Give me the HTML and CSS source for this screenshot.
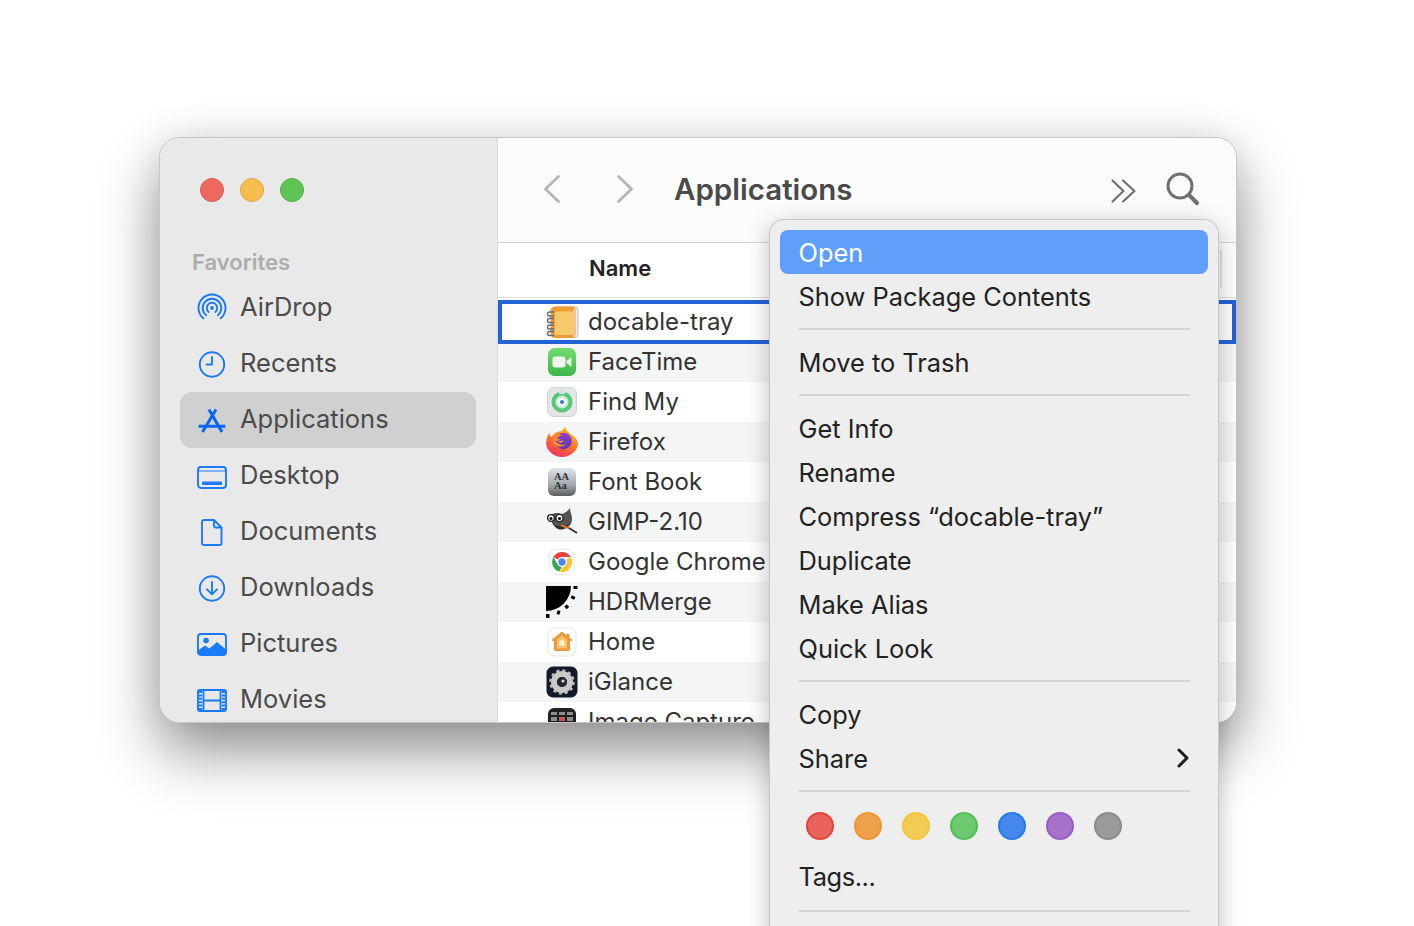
FILE: index.html
```html
<!DOCTYPE html>
<html lang="en">
<head>
<meta charset="utf-8">
<title>Finder context menu</title>
<link rel="stylesheet" href="styles.css">
</head>
<body>
<div class="window">
  <aside class="sidebar">
    <div class="lights"><span class="light red"></span><span class="light yellow"></span><span class="light green"></span></div>
    <div class="side-title">Favorites</div>
    <nav class="side-list">
      <div class="side-item"><svg class="side-icon" viewBox="0 0 32 32"><path d="M7.320 26.340A13.500 13.500 0 1 1 24.680 26.340M10.020 23.120A9.300 9.300 0 1 1 21.980 23.120M12.660 19.980A5.200 5.200 0 1 1 19.340 19.980"/><circle class="solid" cx="16" cy="16" r="1.900"/></svg>AirDrop</div>
      <div class="side-item"><svg class="side-icon" viewBox="0 0 32 32"><circle cx="16" cy="16.500" r="12.200"/><path d="M16 9V16.500H10.500"/></svg>Recents</div>
      <div class="side-item active"><svg class="side-icon dark" viewBox="0 0 32 32"><path class="heavy" d="M13 5.500L26 28M20 5.500L6.500 28M2.500 22.300H29.300"/></svg>Applications</div>
      <div class="side-item"><svg class="side-icon" viewBox="0 0 32 32"><rect x="2" y="7" width="28" height="21" rx="3"/><path class="thin" d="M2 11H30"/><rect class="solid" x="6" y="21.500" width="20" height="3.600" rx="1"/></svg>Desktop</div>
      <div class="side-item"><svg class="side-icon" viewBox="0 0 32 32"><path d="M8 4H18L25.500 11.500V27A2 2 0 0 1 23.500 29H8A2 2 0 0 1 6 27V6A2 2 0 0 1 8 4ZM18 4V9.500A2 2 0 0 0 20 11.500H25.500"/></svg>Documents</div>
      <div class="side-item"><svg class="side-icon" viewBox="0 0 32 32"><circle cx="16" cy="16.500" r="12.200"/><path d="M16 10V22M11 17.300L16 22.300L21 17.300"/></svg>Downloads</div>
      <div class="side-item"><svg class="side-icon" viewBox="0 0 32 32"><rect x="2" y="6" width="28" height="21" rx="3"/><circle class="solid" cx="10" cy="12.500" r="2.800"/><path class="solid" d="M2 27V22.500L9 17.500L13.500 20.500L21 14L30 21.500V27Z"/></svg>Pictures</div>
      <div class="side-item"><svg class="side-icon" viewBox="0 0 32 32"><rect x="2" y="6" width="28" height="21" rx="1.500"/><path d="M7.500 6V27M24.500 6V27M7.500 16.500H24.500"/><path class="perf" d="M4.500 7V26M27.500 7V26"/></svg>Movies</div>
    </nav>
  </aside>
  <main class="main">
    <header class="toolbar">
      <svg class="nav-icon" viewBox="0 0 20 32"><path d="M16.500 3.500L3.500 16L16.500 28.500"/></svg>
      <svg class="nav-icon forward" viewBox="0 0 20 32"><path d="M3.500 3.500L16.500 16L3.500 28.500"/></svg>
      <h1 class="title">Applications</h1>
      <svg class="more-icon" viewBox="0 0 28 26"><path d="M2.500 2.500L13.500 13L2.500 23.500M13 2.500L24.500 13L13 23.500"/></svg>
      <svg class="search-icon" viewBox="0 0 34 34"><circle cx="14" cy="14" r="12"/><path class="handle" d="M23 23L31 31"/></svg>
    </header>
    <div class="columns"><span class="col-name">Name</span><span class="col-divider"></span></div>
    <div class="rows">
      <div class="row selected">
        <svg class="app-icon" viewBox="0 0 32 32"><rect x="7" y="1" width="25" height="30.500" rx="3" fill="#e9e9ee" stroke="#b9bdc9"/><path d="M9 .5H26A3.500 3.500 0 0 1 29.500 4V28.500A3.500 3.500 0 0 1 26 32H9A4.500 4.500 0 0 1 4.500 27.500V5A4.500 4.500 0 0 1 9 .5Z" fill="#ee9c33"/><rect x="9" y="5.500" width="18" height="23.500" rx="1.500" fill="#f9cb68"/><path d="M28 3V31" stroke="#f3e6c9" stroke-width="1.200"/><path d="M8 6H3.500a2 2 0 1 0 0 4H8M8 12.500H3.500a2 2 0 1 0 0 4H8M8 19H3.500a2 2 0 1 0 0 4H8M8 25.500H3.500a2 2 0 1 0 0 4H8" fill="none" stroke="#5b6a80" stroke-width="1.400"/></svg>
        <span>docable-tray</span>
      </div>
      <div class="row">
        <svg class="app-icon" viewBox="0 0 32 32"><defs><linearGradient id="ft" x1="0" y1="0" x2="0" y2="1"><stop offset="0" stop-color="#72dd6d"/><stop offset="1" stop-color="#3db54a"/></linearGradient></defs><rect x="2" y="2" width="28" height="28" rx="6.500" fill="url(#ft)"/><rect x="6.500" y="10.500" width="13" height="11" rx="3" fill="#f2f8f0"/><path d="M20.500 15L25.500 11V21L20.500 17Z" fill="#e8f5e5"/></svg>
        <span>FaceTime</span>
      </div>
      <div class="row">
        <svg class="app-icon" viewBox="0 0 32 32"><rect x="1.500" y="1.500" width="29" height="29" rx="6.500" fill="#e4e6e5" stroke="#d2d3d3"/><circle cx="16" cy="16" r="10.500" fill="#56c878"/><circle cx="16" cy="16" r="6.500" fill="#cfeedd"/><circle cx="16" cy="16" r="3.800" fill="#fff"/><circle cx="16" cy="16" r="2" fill="#2b78e0"/><path d="M13 6.500A3 3 0 0 1 19 6.500V8H13Z" fill="#cfe3ef"/></svg>
        <span>Find My</span>
      </div>
      <div class="row">
        <svg class="app-icon" viewBox="0 0 32 32"><defs><linearGradient id="fx" x1=".7" y1="0" x2=".2" y2="1"><stop offset="0" stop-color="#ffc22f"/><stop offset=".45" stop-color="#fb7a24"/><stop offset="1" stop-color="#ec2d68"/></linearGradient><linearGradient id="fp" x1="0" y1="0" x2="0" y2="1"><stop offset="0" stop-color="#8d3fc7"/><stop offset="1" stop-color="#5a37b5"/></linearGradient></defs><path d="M19 0C19.500 3 21 5 24 7.500C29 11 32 14 32 18A16 14.500 0 0 1 .2 18C.2 13 1.500 9.500 3.500 7C3.500 9 4.500 10.500 5.500 11C7.500 7.500 11 6 13.500 5.500C16 4.500 18.500 3 19 0Z" fill="url(#fx)"/><circle cx="17.500" cy="15" r="8.300" fill="url(#fp)"/><path d="M8.500 8.500C11 7.500 14.500 8 16 9.500C13 10 11.500 11 11 12.500L14.500 13.500C13 15 10 15.500 9 14.500C11 17.500 15 19.500 20 18.500C17.500 21 12 21.500 8.500 19C6 16.500 6 11 8.500 8.500Z" fill="#fb8a2a"/><path d="M11.500 15.200C13 15.800 16 15 17.500 14.500C17 16.500 13.500 17.500 11.500 15.200Z" fill="#ffc22f"/></svg>
        <span>Firefox</span>
      </div>
      <div class="row">
        <svg class="app-icon" viewBox="0 0 32 32"><defs><linearGradient id="fb" x1="0" y1="0" x2="0" y2="1"><stop offset="0" stop-color="#dfe5ea"/><stop offset=".6" stop-color="#a5a9ad"/><stop offset="1" stop-color="#5b5d60"/></linearGradient></defs><rect x="2" y="2" width="28" height="28" rx="6" fill="url(#fb)"/><text class="font-a"><tspan x="8" y="14">AA</tspan><tspan x="8" y="23">Aa</tspan></text></svg>
        <span>Font Book</span>
      </div>
      <div class="row">
        <svg class="app-icon" viewBox="0 0 32 32"><path d="M24 2C24 6 26 9 26 13C26 19 22 22 16 22C11 22 8 20 6 17L5 9C9 6 13 7 16 8C19 7 22 5 24 2Z" fill="#565450"/><path d="M7 17.500C10 21 18 22 24 17.500C23 21 19 23.500 15 23.500C11 23.500 8.500 21 7 17.500Z" fill="#2d2c2a"/><circle cx="5" cy="12" r="3.400" fill="#eee" stroke="#1d1d1d" stroke-width="1.300"/><circle cx="13.500" cy="12" r="3.600" fill="#fff" stroke="#1d1d1d" stroke-width="1.300"/><circle cx="5" cy="12.500" r="1.500" fill="#111"/><circle cx="13.500" cy="12.500" r="1.600" fill="#111"/><path d="M15 19.500L23 22" stroke="#d96f1c" stroke-width="2"/><path d="M23 22L31 27" stroke="#333" stroke-width="2"/></svg>
        <span>GIMP-2.10</span>
      </div>
      <div class="row">
        <svg class="app-icon" viewBox="0 0 32 32"><rect x="3.500" y="3.500" width="25" height="25" rx="5.500" fill="#fff" stroke="#ececec"/><path d="M16 6A10 10 0 0 1 24.700 11H16A5 5 0 0 0 11.600 13.600L7.400 11A10 10 0 0 1 16 6Z" fill="#e0483d"/><path d="M7.400 11L11.700 18.500A5 5 0 0 0 15.800 21L13.300 25.600A10 10 0 0 1 7.400 11Z" fill="#3ba755"/><path d="M24.700 11A10 10 0 0 1 13.300 25.600L17.600 20.700A5 5 0 0 0 20.300 13.500L24.700 11Z" fill="#f9c633"/><circle cx="16" cy="16" r="4.200" fill="#4b87ef" stroke="#fff"/></svg>
        <span>Google Chrome</span>
      </div>
      <div class="row">
        <svg class="app-icon" viewBox="0 0 32 32"><path d="M0 0H25A25 25 0 0 1 0 25Z" fill="#000"/><g fill="#000"><rect x="27.500" y="0" width="4" height="3"/><rect x="25" y="10" width="4" height="3" transform="rotate(25 27 11.500)"/><rect x="19" y="19" width="3.500" height="3.500" transform="rotate(45 20.700 20.700)"/><rect x="11" y="24.500" width="3" height="4" transform="rotate(15 12.500 26.500)"/><rect x="0" y="28" width="3.500" height="4"/></g></svg>
        <span>HDRMerge</span>
      </div>
      <div class="row">
        <svg class="app-icon" viewBox="0 0 32 32"><rect x="2" y="2" width="28" height="28" rx="6.500" fill="#fff" stroke="#e6e6e6"/><path d="M16 5.500L21 9.500V8H23.500V11.500L26.500 14L25 15.500L24 14.800V23A2 2 0 0 1 22 25H10A2 2 0 0 1 8 23V14.800L7 15.500L5.500 14Z" fill="#ea9a3e"/><path d="M16 9.500L21 13.500V22.500H11V13.500Z" fill="#f5c16a"/><path d="M16 13L18.800 15.200V20H13.200V15.200Z" fill="#fdf0c6"/></svg>
        <span>Home</span>
      </div>
      <div class="row">
        <svg class="app-icon" viewBox="0 0 32 32"><rect x=".500" y=".500" width="31" height="31" rx="6.500" fill="#131a29"/><circle cx="16" cy="16" r="8" fill="none" stroke="#c9c9c9" stroke-width="6"/><circle cx="16" cy="16" r="11.500" fill="none" stroke="#bdbdbd" stroke-width="2.500" stroke-dasharray="3 3.020"/><circle cx="16" cy="16" r="5" fill="#23262e"/><circle cx="17" cy="15" r="1.600" fill="#d8d8d8"/></svg>
        <span>iGlance</span>
      </div>
      <div class="row">
        <svg class="app-icon" viewBox="0 0 32 32"><rect x="2" y="2" width="28" height="28" rx="6" fill="#1f1f22"/><g fill="#8d8d8d"><rect x="5" y="6" width="6" height="3"/><rect x="13" y="6" width="6" height="3"/><rect x="21" y="6" width="6" height="3"/><rect x="5" y="11" width="6" height="4"/><rect x="21" y="11" width="6" height="4"/></g><rect x="13" y="11" width="6" height="4" fill="#d05050"/></svg>
        <span>Image Capture</span>
      </div>
    </div>
  </main>
</div>

<div class="menu">
  <div class="menu-item highlighted">Open</div>
  <div class="menu-item">Show Package Contents</div>
  <div class="menu-sep"></div>
  <div class="menu-item">Move to Trash</div>
  <div class="menu-sep"></div>
  <div class="menu-item">Get Info</div>
  <div class="menu-item">Rename</div>
  <div class="menu-item">Compress “docable-tray”</div>
  <div class="menu-item">Duplicate</div>
  <div class="menu-item">Make Alias</div>
  <div class="menu-item">Quick Look</div>
  <div class="menu-sep"></div>
  <div class="menu-item">Copy</div>
  <div class="menu-item has-sub">Share<svg class="sub-arrow" viewBox="0 0 12 20"><path d="M2 2L10 10L2 18"/></svg></div>
  <div class="menu-sep"></div>
  <div class="tag-row">
    <span class="tag tag-red"></span><span class="tag tag-orange"></span><span class="tag tag-yellow"></span><span class="tag tag-green"></span><span class="tag tag-blue"></span><span class="tag tag-purple"></span><span class="tag tag-gray"></span>
  </div>
  <div class="menu-item tags-item">Tags...</div>
  <div class="menu-sep"></div>
</div>
</body>
</html>
```
FILE: styles.css
```css
* { box-sizing: border-box; }
html, body { margin: 0; height: 100%; overflow: hidden; background: #fff; }
body { font-family: Inter, "Liberation Sans", sans-serif; position: relative; }

.window {
  position: absolute;
  z-index: 0;
  left: 160px;
  top: 138px;
  width: 1076px;
  height: 584px;
  display: flex;
  overflow: hidden;
  border-radius: 20px;
  background: #fff;
  box-shadow: 0 0 0 1px #c6c6c6, 0 30px 60px rgba(0, 0, 0, .42), 0 0 40px rgba(0, 0, 0, .1);
}

/* sidebar */
.sidebar {
  width: 338px;
  flex: none;
  padding: 40px 21px 0 20px;
  background: #e9e9e9;
  border-right: 1px solid #dcdcdc;
}
.lights { display: flex; gap: 16px; padding-left: 20px; }
.light { width: 24px; height: 24px; border-radius: 50%; border: 1px solid; }
.red { background: #f0695f; border-color: #dc5a50; }
.yellow { background: #f6bd4f; border-color: #dfa540; }
.green { background: #5ec454; border-color: #52ae48; }
.side-title {
  margin: 46px 0 4px 12px;
  font-size: 22px;
  line-height: 28px;
  font-weight: 600;
  color: #adadad;
}
.side-item {
  display: flex;
  align-items: center;
  gap: 12px;
  height: 56px;
  padding: 0 0 4px 16px;
  font-size: 25.500px;
  color: #4b4b4b;
  border-radius: 12px;
}
.side-item.active { background: #d0d0d0; }
.side-icon {
  width: 32px;
  height: 32px;
  flex: none;
  margin-top: 4px;
  fill: none;
  stroke: #1b7bf6;
  stroke-width: 1.900;
  stroke-linecap: round;
  stroke-linejoin: round;
}
.side-icon .solid { fill: #1b7bf6; stroke: none; }
.side-icon .thin { stroke-width: 1.200; }
.side-icon .perf { stroke-width: 3.400; stroke-linecap: butt; stroke-dasharray: 2 1.400; }
.side-icon.dark { stroke: #0a66ee; }
.side-icon .heavy { stroke-width: 3; stroke-linecap: butt; }

/* main pane */
.main { flex: 1; min-width: 0; }
.toolbar {
  display: flex;
  align-items: center;
  height: 105px;
  padding: 0 36px 3px 44px;
  background: #fbfbfb;
  border-bottom: 1px solid #d6d6d6;
}
.nav-icon {
  width: 20px;
  height: 32px;
  flex: none;
  fill: none;
  stroke: #b5b5b5;
  stroke-width: 2.800;
  stroke-linecap: round;
  stroke-linejoin: round;
}
.forward { margin-left: 53px; }
.title {
  margin: 0 auto 0 39px;
  font-size: 29.500px;
  font-weight: 600;
  color: #4a4a4a;
}
.more-icon {
  width: 28px;
  height: 26px;
  flex: none;
  margin-top: 5px;
  fill: none;
  stroke: #707070;
  stroke-width: 2.200;
  stroke-linecap: round;
  stroke-linejoin: round;
}
.search-icon {
  width: 34px;
  height: 34px;
  flex: none;
  margin-left: 28px;
  fill: none;
  stroke: #707070;
  stroke-width: 3;
  stroke-linecap: round;
}
.search-icon .handle { stroke-width: 4; }
.columns {
  display: flex;
  align-items: center;
  justify-content: space-between;
  height: 55px;
  padding: 0 14px 4px 91px;
  background: #fff;
  border-bottom: 1px solid #dedede;
}
.col-name { font-size: 22px; font-weight: 600; color: #232323; }
.col-divider { width: 2px; height: 38px; margin-top: 2px; background: #e4e4e4; }
.rows { padding-top: 4px; }
.row {
  display: flex;
  align-items: center;
  gap: 10px;
  height: 40px;
  padding: 0 0 2px 48px;
  font-size: 24px;
  color: #333;
  background: #fff;
  white-space: nowrap;
}
.row:nth-child(even) { background: #f4f5f5; }
.row.selected {
  position: relative;
  z-index: 1;
  margin: 0 2px;
  padding-left: 46px;
  outline: 4px solid #2463d6;
  outline-offset: -2px;
}
.app-icon { width: 32px; height: 32px; flex: none; margin-top: 2px; overflow: visible; }
.font-a { font: 600 10.500px "Liberation Serif", serif; fill: #2d3136; }

/* context menu */
.menu {
  position: absolute;
  z-index: 1;
  left: 770px;
  top: 220px;
  width: 448px;
  padding: 10px 10px 60px;
  border-radius: 14px;
  background: #eee;
  box-shadow: 0 0 0 1px #c8c8c8, 0 6px 24px rgba(0, 0, 0, .28);
}
.menu-item {
  display: flex;
  align-items: center;
  justify-content: space-between;
  height: 44px;
  padding: 0 19px 0 18.500px;
  font-size: 25.400px;
  color: #222;
  border-radius: 8px;
}
.menu-item.highlighted { background: #5f9ffa; color: #fff; }
.menu-item.tags-item { height: 46px; padding-bottom: 2px; letter-spacing: -.4px; }
.sub-arrow {
  width: 12px;
  height: 20px;
  fill: none;
  stroke: #1c1c1c;
  stroke-width: 3;
  stroke-linecap: round;
  stroke-linejoin: round;
}
.menu-sep { height: 2px; margin: 10px 18px 10px 19px; background: #d4d4d4; }
.tag-row { display: flex; gap: 20px; height: 52px; padding: 10px 0 0 26px; }
.tag { width: 28px; height: 28px; border-radius: 50%; border: 2px solid; }
.tag-red { background: #e9635c; border-color: #e4453d; }
.tag-orange { background: #eea24b; border-color: #ee9636; }
.tag-yellow { background: #f2cb52; border-color: #f3c642; }
.tag-green { background: #6bca6d; border-color: #57bf56; }
.tag-blue { background: #4488ee; border-color: #2a79f0; }
.tag-purple { background: #a672ca; border-color: #9a5dc5; }
.tag-gray { background: #9a999c; border-color: #8c8b8e; }
```
